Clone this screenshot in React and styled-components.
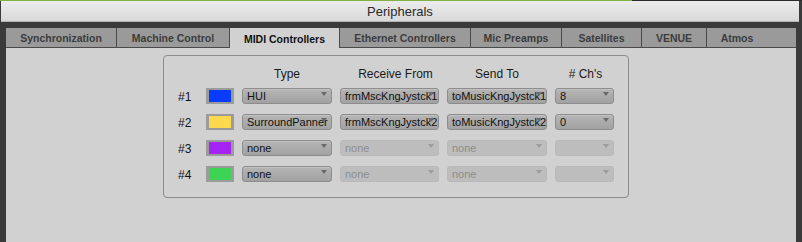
import React from "react";
import styled, { createGlobalStyle, css } from "styled-components";

const Global = createGlobalStyle`
  html, body { margin: 0; padding: 0; background: #3a3a3a; }
  body { font-family: "Liberation Sans", Arial, sans-serif; }
`;

const Window = styled.div`
  width: 802px;
  height: 242px;
  display: flex;
  flex-direction: column;
  background: #3a3a3a;
  overflow: hidden;
`;

const TopEdge = styled.div`
  height: 1px;
  flex: none;
  background: linear-gradient(to right, #7fb144 0, #7fb144 632px, #2a2a2a 632px);
`;

const TitleBar = styled.div`
  height: 21px;
  flex: none;
  margin: 0 3px 0 1px;
  box-sizing: border-box;
  background: linear-gradient(#ececec, #d9d9d9);
  border-bottom: 1px solid #b4b4b4;
  text-align: center;
  font-size: 13px;
  line-height: 21px;
  color: #2a2a2a;
`;

const Frame = styled.div`
  flex: 1;
  display: flex;
  flex-direction: column;
  padding: 6px 6px 0 6px;
  min-height: 0;
`;

const TabBar = styled.div`
  height: 20px;
  flex: none;
  display: flex;
  background: #9a9a9a;
`;

const Tab = styled.div`
  box-sizing: border-box;
  height: 20px;
  flex: none;
  display: flex;
  align-items: center;
  justify-content: center;
  font-size: 10.5px;
  font-weight: bold;
  color: ${(p) => (p.$active ? "#111" : "#3c3c3c")};
  background: ${(p) => (p.$active ? "#d1d1d1" : "#9a9a9a")};
  border-right: ${(p) => (p.$last ? "none" : "1px solid #4a4a4a")};
  border-bottom: ${(p) => (p.$active ? "none" : "1px solid #4a4a4a")};
  padding-top: 1px;
`;

const TabFiller = styled.div`
  flex: 1;
  box-sizing: border-box;
  border-bottom: 1px solid #4a4a4a;
`;

const Content = styled.div`
  flex: 1;
  background: #d1d1d1;
  padding: 7px 0 0 157px;
`;

const Panel = styled.div`
  box-sizing: border-box;
  width: 466px;
  border: 1px solid #8c8c8c;
  border-radius: 4px;
  padding: 11px 14px 15px 14px;
  display: flex;
  flex-direction: column;
`;

const gridCols = css`
  display: grid;
  grid-template-columns: 20px 28px 90px 99px 100px 59px;
  column-gap: 8px;
  align-items: center;
`;

const HeaderRow = styled.div`
  ${gridCols};
  height: 14px;
  margin-bottom: 7px;
`;

const HeaderCell = styled.div`
  font-size: 12px;
  line-height: 14px;
  color: #1a1a1a;
  text-align: center;
  white-space: nowrap;
  padding-left: ${(p) => p.$shift || 0}px;
`;

const Rows = styled.div`
  display: flex;
  flex-direction: column;
  gap: 10px;
`;

const Row = styled.div`
  ${gridCols};
  height: 16px;
`;

const RowLabel = styled.div`
  font-size: 12px;
  color: #111;
  line-height: 14px;
  padding-top: 2px;
`;

const Swatch = styled.div`
  box-sizing: border-box;
  width: 28px;
  height: 16px;
  padding: 2px 3px;
  background: #9b9b9b;
`;

const SwatchFill = styled.div`
  width: 22px;
  height: 12px;
  background: ${(p) => p.$color};
`;

const Select = styled.div`
  position: relative;
  box-sizing: border-box;
  height: 16px;
  border-radius: 3px;
  padding: 0 4px;
  font-size: 11px;
  line-height: 14px;
  white-space: nowrap;
  overflow: hidden;
  ${(p) =>
    p.$disabled
      ? css`
          background: #bdbdbd;
          border: 1px solid #b9b9b9;
          color: #8e8e8e;
        `
      : css`
          background: linear-gradient(#b5b5b5, #a2a2a2);
          border: 1px solid #8d8d8d;
          color: #111;
          box-shadow: inset 0 1px 0 rgba(255, 255, 255, 0.18);
        `}
`;

const Arrow = styled.span`
  position: absolute;
  right: 4px;
  top: 3px;
  width: 0;
  height: 0;
  border-left: 3.5px solid transparent;
  border-right: 3.5px solid transparent;
  border-top: 4px solid ${(p) => (p.$disabled ? "#9c9c9c" : "#6a6a6a")};
`;

const tabs = [
  { label: "Synchronization", w: 111 },
  { label: "Machine Control", w: 113 },
  { label: "MIDI Controllers", w: 110, active: true },
  { label: "Ethernet Controllers", w: 131 },
  { label: "Mic Preamps", w: 91 },
  { label: "Satellites", w: 80 },
  { label: "VENUE", w: 65 },
  { label: "Atmos", w: 60, last: true },
];

const rows = [
  { n: "#1", color: "#0a3cff", type: "HUI", recv: "frmMscKngJystck1", send: "toMusicKngJystck1", ch: "8", on: true },
  { n: "#2", color: "#ffd94d", type: "SurroundPanner", recv: "frmMscKngJystck2", send: "toMusicKngJystck2", ch: "0", on: true },
  { n: "#3", color: "#a423f5", type: "none", recv: "none", send: "none", ch: "", on: false },
  { n: "#4", color: "#3dd456", type: "none", recv: "none", send: "none", ch: "", on: false },
];

const Dropdown = ({ value, disabled }) => (
  <Select $disabled={disabled}>
    {value}
    <Arrow $disabled={disabled} />
  </Select>
);

export default function App() {
  return (
    <>
      <Global />
      <Window>
        <TopEdge />
        <TitleBar>Peripherals</TitleBar>
        <Frame>
          <TabBar>
            {tabs.map((t) => (
              <Tab key={t.label} $active={t.active} $last={t.last} style={{ width: t.w }}>
                {t.label}
              </Tab>
            ))}
            <TabFiller />
          </TabBar>
          <Content>
            <Panel>
              <HeaderRow>
                <span />
                <span />
                <HeaderCell>Type</HeaderCell>
                <HeaderCell $shift={12}>Receive From</HeaderCell>
                <HeaderCell>Send To</HeaderCell>
                <HeaderCell $shift={2}># Ch's</HeaderCell>
              </HeaderRow>
              <Rows>
                {rows.map((r) => (
                  <Row key={r.n}>
                    <RowLabel>{r.n}</RowLabel>
                    <Swatch>
                      <SwatchFill $color={r.color} />
                    </Swatch>
                    <Dropdown value={r.type} />
                    <Dropdown value={r.recv} disabled={!r.on} />
                    <Dropdown value={r.send} disabled={!r.on} />
                    <Dropdown value={r.ch} disabled={!r.on} />
                  </Row>
                ))}
              </Rows>
            </Panel>
          </Content>
        </Frame>
      </Window>
    </>
  );
}
